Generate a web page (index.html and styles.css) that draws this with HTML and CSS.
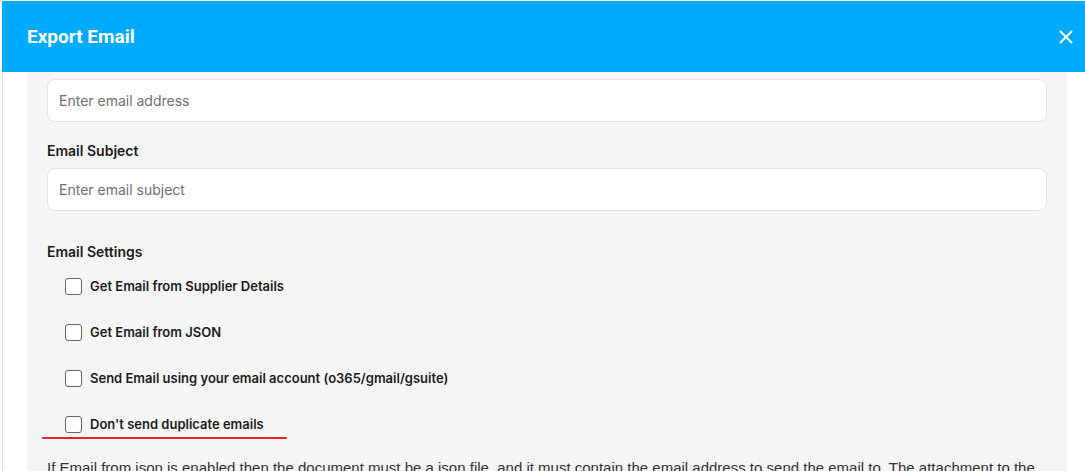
FILE: index.html
```html
<!DOCTYPE html>
<html lang="en">

<head>
    <meta charset="UTF-8">
    <meta name="viewport" content="width=device-width, initial-scale=1.0">
    <title>Export Email</title>
    <link rel="stylesheet" href="styles.css">
</head>

<body>
    <div class="modal">
        <div class="modal-header">
            <h1>Export Email</h1>
            <button class="close-btn" aria-label="Close">
                <svg width="14" height="14" viewBox="0 0 14 14">
                    <path d="M1 1L13 13M13 1L1 13" stroke="#fff" stroke-width="2" fill="none" />
                </svg>
            </button>
        </div>

        <div class="modal-body">
            <div class="panel">
                <div class="field">
                    <input class="text-input" type="text" placeholder="Enter email address">
                </div>

                <div class="field">
                    <label class="field-label">Email Subject</label>
                    <input class="text-input" type="text" placeholder="Enter email subject">
                </div>

                <div class="settings">
                    <div class="field-label">Email Settings</div>
                    <label class="check-row"><input type="checkbox"><span>Get Email from Supplier Details</span></label>
                    <label class="check-row"><input type="checkbox"><span>Get Email from JSON</span></label>
                    <label class="check-row"><input type="checkbox"><span>Send Email using your email account (o365/gmail/gsuite)</span></label>
                    <label class="check-row marked"><input type="checkbox"><span>Don't send duplicate emails</span></label>
                </div>

                <p class="note">If Email from json is enabled then the document must be a json file, and it must contain the email address to send the email to. The attachment to the email will be the document itself.</p>
            </div>
        </div>
    </div>
</body>

</html>
```

FILE: styles.css
```css
:root {
    --header-bg: #00aaff;
    --panel-bg: #f5f5f5;
    --input-border: #e3e3e3;
    --text-primary: #1c1c1c;
    --text-muted: #6f6f6f;
    --mark-red: #e8212b;
}

html,
body {
    margin: 0;
    padding: 0;
    height: 100%;
    overflow: hidden;
    background: #fff;
}

body {
    font-family: 'Inter', 'Noto Sans', sans-serif;
    color: var(--text-primary);
    padding: 1px 0 0 2px;
    box-sizing: border-box;
}

.modal {
    border-left: 1px solid #e2e2e2;
    height: 100%;
}

.modal-header {
    background-color: var(--header-bg);
    height: 71px;
    margin-left: -1px;
    display: flex;
    align-items: center;
    justify-content: space-between;
    padding: 0 12px 0 25px;
}

.modal-header h1 {
    margin: 0;
    color: #fff;
    font-family: 'Roboto', 'Liberation Sans', sans-serif;
    font-size: 19px;
    font-weight: 700;
}

.close-btn {
    background: none;
    border: none;
    padding: 0;
    width: 14px;
    height: 14px;
    cursor: pointer;
    display: flex;
}

.modal-body {
    padding: 0 18px 0 24px;
}

.panel {
    background-color: var(--panel-bg);
    padding: 7px 20px 0 20px;
    min-height: 420px;
}

.field {
    display: flex;
    flex-direction: column;
    margin-bottom: 19px;
}

.field-label {
    font-size: 14px;
    font-weight: 600;
    line-height: 20px;
    margin-bottom: 7px;
}

.text-input {
    height: 43px;
    box-sizing: border-box;
    border: 1px solid var(--input-border);
    border-radius: 8px;
    background: #fff;
    padding: 0 11px;
    font-family: 'Inter', 'Noto Sans', sans-serif;
    font-size: 14px;
    color: var(--text-primary);
    outline: none;
}

.text-input::placeholder {
    color: var(--text-muted);
}

.settings {
    margin-top: 31px;
    display: flex;
    flex-direction: column;
}

.settings .field-label {
    margin-bottom: 1px;
}

.check-row {
    position: relative;
    display: flex;
    align-items: center;
    height: 46px;
    padding-left: 18px;
    font-size: 13px;
    font-weight: 600;
    cursor: pointer;
}

.check-row input {
    appearance: none;
    width: 17px;
    height: 17px;
    margin: 0 8px 0 0;
    border: 1px solid #666;
    border-radius: 3px;
    background: #fff;
}

/* red underline drawn under the last option */
.marked::after {
    content: "";
    position: absolute;
    left: -5px;
    bottom: 8px;
    width: 245px;
    height: 2px;
    border-radius: 1px;
    background: var(--mark-red);
}

.note {
    margin: 11px 0 0;
    font-family: 'Liberation Sans', Arial, sans-serif;
    font-size: 15px;
    line-height: 20px;
    color: #333;
}
```
